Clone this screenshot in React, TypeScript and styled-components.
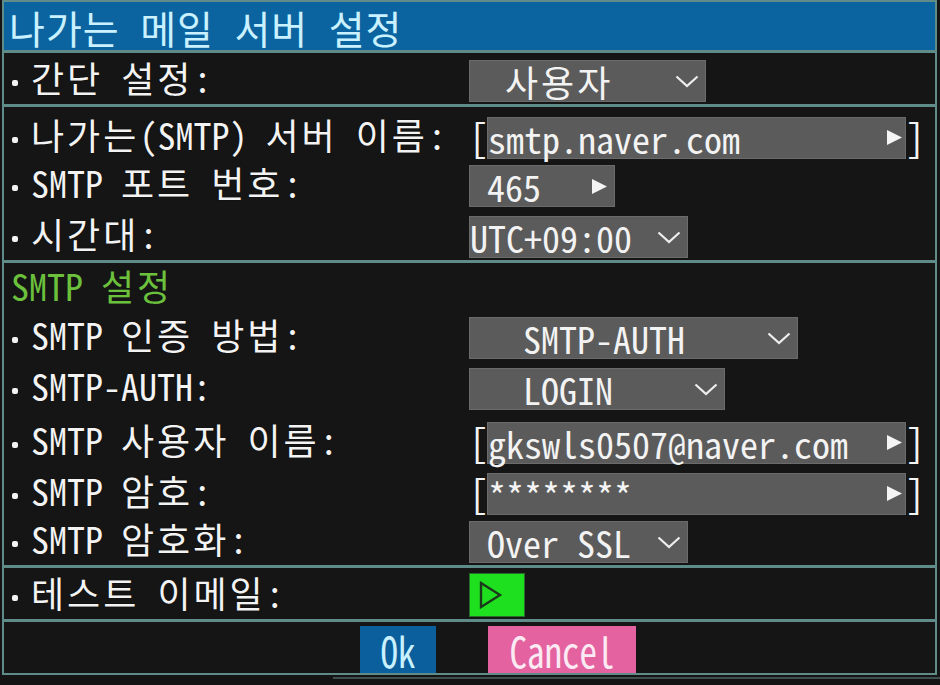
import styled, { createGlobalStyle } from "styled-components"

const FONT = `"Noto Sans Mono CJK KR", "Noto Sans Mono CJK SC", "DejaVu Sans Mono", "Noto Sans CJK KR", monospace`

const COLORS = {
  page: '#141414',
  panel: '#151515',
  line: '#5f8b88',
  title: '#0b64a0',
  titleText: '#c9f1ff',
  text: '#f3f3f3',
  green: '#6cc13c',
  control: '#5b5b5b',
  controlEdge: '#6b6b6b',
  play: '#1fe01f',
  ok: '#0b5f9c',
  cancel: '#e3629f',
}

const GlobalStyle = createGlobalStyle`
  html, body {
    margin: 0;
    padding: 0;
    background: ${COLORS.page};
  }

  body {
    width: 940px;
    height: 685px;
    overflow: hidden;
    font-family: ${FONT};
    color: ${COLORS.text};
  }
`

const Screen = styled.div`
  width: 940px;
  height: 685px;
  display: flex;
  flex-direction: column;
  background: ${COLORS.page};
`

const Dialog = styled.div`
  width: 935px;
  margin-left: 2px;
  box-sizing: border-box;
  border: 2px solid ${COLORS.line};
  background: ${COLORS.panel};
  display: flex;
  flex-direction: column;
`

const TitleBar = styled.div`
  height: 48px;
  box-sizing: border-box;
  padding: 3px 0 0 5px;
  background: ${COLORS.title};
  color: ${COLORS.titleText};
  font-size: 39px;
  letter-spacing: 1px;
  line-height: 44px;
  white-space: pre;
`

const Section = styled.div`
  border-top: 3px solid ${COLORS.line};
  display: flex;
  flex-direction: column;
`

const Row = styled.div`
  height: 51px;
  display: grid;
  grid-template-columns: 465px 1fr;
  align-items: center;
`

const Label = styled.div`
  display: flex;
  align-items: center;
  padding-left: 8px;
  font-size: 36px;
  white-space: pre;
  text-shadow: 0 0 1px #000;
  margin-top: -3px;
`

const Bullet = styled.span`
  width: 6px;
  height: 6px;
  border-radius: 2px;
  background: ${COLORS.text};
  margin-right: 13px;
  margin-top: 12px;
`

// Hangul runs are drawn a little wider than the Latin half-width cells
const Hangul = styled.span`
  font-size: 36px;
  letter-spacing: 3px;
`

const GroupTitle = styled.div`
  height: 51px;
  display: flex;
  align-items: center;
  padding-left: 7px;
  font-size: 36px;
  color: ${COLORS.green};
  white-space: pre;
  margin-top: -4px;
`

const Value = styled.div`
  display: flex;
  align-items: center;
  padding-top: 5px;
`

const Select = styled.div<{ $w: number; $pad: number }>`
  width: ${p => p.$w}px;
  height: 42px;
  box-sizing: border-box;
  background: ${COLORS.control};
  border: 1px solid ${COLORS.controlEdge};
  display: flex;
  align-items: center;
  padding-left: ${p => p.$pad}px;
  padding-right: 6px;
  font-size: 36px;
  white-space: pre;
`

const SelectText = styled.span`
  flex: 1;
  overflow: hidden;
`

const Bracket = styled.span`
  width: 18px;
  font-size: 38px;
  text-align: center;
  margin-top: -4px;
`

const Field = styled.div`
  width: 419px;
  height: 42px;
  box-sizing: border-box;
  background: ${COLORS.control};
  border: 1px solid ${COLORS.controlEdge};
  display: flex;
  align-items: center;
  padding-right: 2px;
  font-size: 36px;
  white-space: pre;
`

const PlayButton = styled.div`
  width: 56px;
  height: 44px;
  box-sizing: border-box;
  background: ${COLORS.play};
  border: 1px solid #2a6a2a;
  display: flex;
  align-items: center;
  padding-left: 9px;
  margin-top: -2px;
`

const ButtonBar = styled.div`
  height: 51px;
  display: flex;
  align-items: center;
  gap: 52px;
  padding-left: 356px;
`

const DialogButton = styled.div<{ $kind: 'ok' | 'cancel' }>`
  height: 47px;
  width: ${p => (p.$kind === 'ok' ? 76 : 148)}px;
  background: ${p => (p.$kind === 'ok' ? COLORS.ok : COLORS.cancel)};
  color: ${p => (p.$kind === 'ok' ? COLORS.titleText : '#fbeaf4')};
  display: flex;
  align-items: center;
  justify-content: center;
  font-size: 35px;
  margin-top: 3px;

  > span {
    display: inline-block;
    transform: scaleY(1.2);
  }
`

const BackEdge = styled.div`
  margin-left: 333px;
  margin-top: 2px;
  border-top: 2px solid #3f4f4d;
`

const KText = ({ children }: { children: string }) => (
  <span>
    {children.split(/([\uAC00-\uD7A3]+)/).map((part, i) =>
      /[\uAC00-\uD7A3]/.test(part) ? <Hangul key={i}>{part}</Hangul> : part
    )}
  </span>
)

const Chevron = () => (
  <svg width="24" height="13" viewBox="0 0 24 13">
    <polyline points="1.5,1.5 12,11 22.5,1.5" fill="none" stroke="#eeeeee" strokeWidth="2.2" />
  </svg>
)

const Arrow = () => (
  <svg width="17" height="17" viewBox="0 0 17 17">
    <polygon points="1,1 16,8.5 1,16" fill="#f4f4f4" />
  </svg>
)

const PlayIcon = () => (
  <svg width="24" height="28" viewBox="0 0 24 28">
    <polygon points="2,2 21,14 2,26" fill="none" stroke="#1b3a1b" strokeWidth="2.4" strokeLinejoin="miter" />
  </svg>
)

type SelectProps = { w: number; pad: number; text: string; arrow?: boolean }

const Dropdown = ({ w, pad, text, arrow }: SelectProps) => (
  <Select $w={w} $pad={pad}>
    <SelectText><KText>{text}</KText></SelectText>
    {arrow ? <Arrow /> : <Chevron />}
  </Select>
)

const TextField = ({ text }: { text: string }) => (
  <>
    <Bracket>[</Bracket>
    <Field>
      <SelectText>{text}</SelectText>
      <Arrow />
    </Field>
    <Bracket>]</Bracket>
  </>
)

const SettingRow = ({ label, children }: { label: string; children: React.ReactNode }) => (
  <Row>
    <Label>
      <Bullet />
      <KText>{label}</KText>
    </Label>
    <Value>{children}</Value>
  </Row>
)

const App = () => {
  return (
    <Screen>
      <GlobalStyle />
      <Dialog>
        <TitleBar>나가는 메일 서버 설정</TitleBar>

        <Section>
          <SettingRow label="간단 설정:">
            <Dropdown w={237} pad={35} text="사용자" />
          </SettingRow>
        </Section>

        <Section>
          <SettingRow label="나가는(SMTP) 서버 이름:">
            <TextField text="smtp.naver.com" />
          </SettingRow>
          <SettingRow label="SMTP 포트 번호:">
            <Dropdown w={146} pad={17} text="465" arrow />
          </SettingRow>
          <SettingRow label="시간대:">
            <Dropdown w={219} pad={0} text="UTC+09:00" />
          </SettingRow>
        </Section>

        <Section>
          <GroupTitle><KText>SMTP 설정</KText></GroupTitle>
          <SettingRow label="SMTP 인증 방법:">
            <Dropdown w={329} pad={53} text="SMTP-AUTH" />
          </SettingRow>
          <SettingRow label="SMTP-AUTH:">
            <Dropdown w={256} pad={53} text="LOGIN" />
          </SettingRow>
          <SettingRow label="SMTP 사용자 이름:">
            <TextField text="gkswls0507@naver.com" />
          </SettingRow>
          <SettingRow label="SMTP 암호:">
            <TextField text="********" />
          </SettingRow>
          <SettingRow label="SMTP 암호화:">
            <Dropdown w={219} pad={17} text="Over SSL" />
          </SettingRow>
        </Section>

        <Section>
          <SettingRow label="테스트 이메일:">
            <PlayButton>
              <PlayIcon />
            </PlayButton>
          </SettingRow>
        </Section>

        <Section>
          <ButtonBar>
            <DialogButton $kind="ok"><span>Ok</span></DialogButton>
            <DialogButton $kind="cancel"><span>Cancel</span></DialogButton>
          </ButtonBar>
        </Section>
      </Dialog>
      <BackEdge />
    </Screen>
  )
}

export default App
